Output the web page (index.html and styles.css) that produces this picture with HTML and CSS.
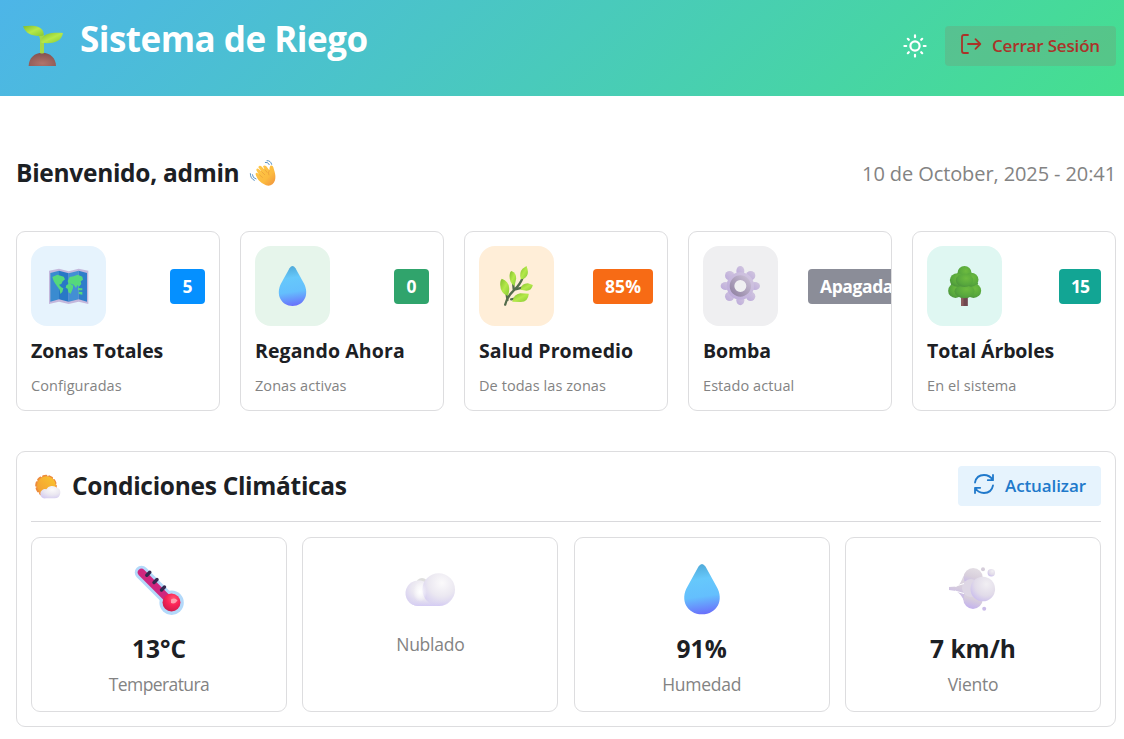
FILE: index.html
```html
<!DOCTYPE html>
<html lang="es">
<head>
<meta charset="utf-8">
<title>Sistema de Riego</title>
<link rel="stylesheet" href="styles.css">
</head>
<body>
<svg class="defs" width="0" height="0" aria-hidden="true">
  <defs>
    <linearGradient id="drop" x1="0.4" y1="0" x2="0.5" y2="1"><stop offset="0" stop-color="#4fa9d8"/><stop offset=".3" stop-color="#66c8fb"/><stop offset=".65" stop-color="#64bffd"/><stop offset="1" stop-color="#6a70fb"/></linearGradient>
    <linearGradient id="leaf" x1="0" y1="0" x2="1" y2="1"><stop offset="0" stop-color="#80bd2c"/><stop offset=".5" stop-color="#b5e94a"/><stop offset="1" stop-color="#86c936"/></linearGradient>
    <radialGradient id="soil" cx=".5" cy=".8" r=".8"><stop offset="0" stop-color="#b0746a"/><stop offset="1" stop-color="#83504f"/></radialGradient>
    <linearGradient id="gear" x1="1" y1="0" x2="0" y2="1"><stop offset="0" stop-color="#d3c8e0"/><stop offset="1" stop-color="#bba9da"/></linearGradient>
    <linearGradient id="ring" x1="1" y1="0" x2="0" y2="1"><stop offset="0" stop-color="#c8bdd4"/><stop offset="1" stop-color="#9385a4"/></linearGradient>
    <radialGradient id="lobe" cx=".6" cy=".35" r=".8"><stop offset="0" stop-color="#6dbb3f"/><stop offset=".6" stop-color="#57a73d"/><stop offset="1" stop-color="#47893b"/></radialGradient>
    <radialGradient id="puff" cx=".6" cy=".3" r=".75"><stop offset="0" stop-color="#fbfafb"/><stop offset=".55" stop-color="#ebe8f1"/><stop offset="1" stop-color="#d5cdf1"/></radialGradient>
    <linearGradient id="base" x1="0" y1="0" x2="0" y2="1"><stop offset="0" stop-color="#e4e1ee" stop-opacity="0"/><stop offset="1" stop-color="#d4cbf4"/></linearGradient>
    <radialGradient id="glow"><stop offset="0" stop-color="#fff"/><stop offset="1" stop-color="#fff" stop-opacity="0"/></radialGradient>
    <linearGradient id="wind" x1="0.7" y1="0" x2="0.4" y2="1"><stop offset="0" stop-color="#e4dfe5"/><stop offset=".5" stop-color="#d8cfdc"/><stop offset="1" stop-color="#c3b1ee"/></linearGradient>
    <radialGradient id="gust" cx=".65" cy=".3" r=".8"><stop offset="0" stop-color="#f1eff3"/><stop offset=".6" stop-color="#e1dbe9"/><stop offset="1" stop-color="#c8baee"/></radialGradient>
    <linearGradient id="sun" x1="1" y1="0" x2="0" y2="1"><stop offset="0" stop-color="#f9c62e"/><stop offset="1" stop-color="#f39a35"/></linearGradient>
    <linearGradient id="hand" x1="0" y1="0" x2="1" y2="1"><stop offset="0" stop-color="#ffc94a"/><stop offset=".6" stop-color="#fcbb3f"/><stop offset="1" stop-color="#ef8f3c"/></linearGradient>
    <radialGradient id="bulb" cx=".6" cy=".3" r=".7"><stop offset="0" stop-color="#ff5a78"/><stop offset=".5" stop-color="#fb2457"/><stop offset="1" stop-color="#cf1c4c"/></radialGradient>
  </defs>
</svg>

<header class="topbar">
  <div class="brand">
    <svg class="brand-icon" viewBox="66 75 126 126">
      <path d="M86 198C86 174 104 158 127 158S168 174 168 198Z" fill="url(#soil)"/>
      <path d="M120 159V118Q118 103 106 99L130 102Q134 108 132 120V159Q126 162 120 159Z" fill="#a4d84a"/>
      <path d="M69 79C96 76 126 76 131 99Q132 106 128 107C101 110 79 105 69 79Z" fill="url(#leaf)"/>
      <path d="M189 99C162 97 128 98 123 122Q122 130 130 129C158 131 184 127 189 99Z" fill="url(#leaf)"/>
    </svg>
    <h1 class="brand-title">Sistema de Riego</h1>
  </div>
  <div class="top-actions">
    <svg class="theme-icon" viewBox="0 0 24 24" fill="none" stroke="#fff" stroke-width="2.2" stroke-linecap="round"><circle cx="12" cy="12" r="4.6"/><path d="M12 1.4V3.2M12 20.8V22.6M1.4 12H3.2M20.8 12H22.6M5.8 5.8L4.8 4.8M18.2 5.8L19.2 4.8M5.8 18.2L4.8 19.2M18.2 18.2L19.2 19.2"/></svg>
    <button class="btn btn-logout">
      <svg class="btn-icon" viewBox="0 0 22 22" fill="none" stroke="currentColor" stroke-width="1.8" stroke-linecap="round" stroke-linejoin="round"><path d="M8 2H4Q2 2 2 4V18Q2 20 4 20H8M8 11H20M15.5 6.2L20.3 11L15.5 15.8"/></svg>
      <span class="btn-text">Cerrar Sesión</span>
    </button>
  </div>
</header>

<main class="content">
  <section class="welcome">
    <h2 class="welcome-title"><span>Bienvenido, admin</span>
      <svg class="wave" viewBox="747 57 84 84">
        <path d="M776 121C771 113 764 102 768 99Q772 97 777 104L769 91Q768 84 775 86L784 94L775 82Q776 75 783 78L794 89L789 79Q793 74 799 79L808 91Q808 80 811 77Q818 74 820 82C823 94 829 106 825 121C821 134 810 140 798 136Q786 132 776 121Z" fill="url(#hand)"/>
        <path d="M778 104L788 113M784 94L795 105M794 88L802 98M808 91Q803 99 807 106" fill="none" stroke="#e99a38" stroke-width="2"/>
        <path d="M796 67Q804 65 808 74M801 62Q812 61 815 73M757 104Q758 115 768 117M751 101Q751 116 763 121" fill="none" stroke="#3f82bd" stroke-width="2.6" stroke-linecap="round"/>
      </svg>
    </h2>
    <time class="date">10 de October, 2025 - 20:41</time>
  </section>

  <section class="stats">
    <article class="card">
      <div class="card-top">
        <div class="tile tile-blue"><svg class="emoji" viewBox="117 123 120 120">
          <path d="M117 137L147 131L176 139L206 131L235 137V237L206 230L176 237L147 230L117 237Z" fill="#c4b7dc"/>
          <path d="M121 144L147 137V223L121 230Z" fill="#3a8bd0"/><path d="M147 137L176 145V230L147 223Z" fill="#2878c6"/><path d="M176 145L206 137V223L176 230Z" fill="#438fd4"/><path d="M206 137L231 144V230L206 223Z" fill="#2f7dca"/>
          <path d="M127 156L142 149L161 155L165 163L158 169L154 177L147 179L154 187L160 190L157 201L151 207L149 194L143 186L136 176L131 168ZM169 181L179 175L190 182L188 192L182 206L175 202L173 191L167 188ZM173 168L179 156L191 154L203 149L217 155L219 164L212 169L214 177L207 185L202 180L198 189L191 179L183 176L176 177ZM204 189L217 190V196H204ZM206 200L217 201V209L206 207Z" fill="#55d87c"/>
        </svg></div>
        <span class="badge badge-blue">5</span>
      </div>
      <h3 class="card-title">Zonas Totales</h3><p class="card-sub">Configuradas</p>
    </article>
    <article class="card">
      <div class="card-top">
        <div class="tile tile-green"><svg class="emoji" viewBox="113.5 123 120 120"><path d="M163 130Q172 116 181 130L206 175C224 209 206 243 172 243S120 209 138 175Z" fill="url(#drop)"/></svg></div>
        <span class="badge badge-green">0</span>
      </div>
      <h3 class="card-title wide">Regando Ahora</h3><p class="card-sub">Zonas activas</p>
    </article>
    <article class="card">
      <div class="card-top">
        <div class="tile tile-orange"><svg class="emoji" viewBox="109.5 123 120 120">
          <path d="M134 239Q140 214 160 196T188 154M141 225L138 206M152 223L174 219M160 196L158 177M165 193L188 187" fill="none" stroke="#536c4b" stroke-width="7" stroke-linecap="round"/>
          <g fill="url(#leaf)"><path d="M142 213Q120 205 119 179Q119 165 124 161Q144 168 146 188Q147 202 142 213Z"/><path d="M162 184Q147 174 147 153Q148 140 153 138Q168 145 167 161Z"/><path d="M181 163Q175 143 186 131L198 123Q206 143 199 153Q192 163 181 163Z"/><path d="M180 194Q183 175 202 175L217 180Q214 197 198 197Z"/><path d="M155 230Q160 208 179 205L205 206Q203 230 181 231Z"/></g>
        </svg></div>
        <span class="badge badge-orange">85%</span>
      </div>
      <h3 class="card-title wide">Salud Promedio</h3><p class="card-sub">De todas las zonas</p>
    </article>
    <article class="card">
      <div class="card-top">
        <div class="tile tile-gray"><svg class="emoji" viewBox="123 123 120 120">
          <g fill="url(#gear)"><ellipse cx="181" cy="138" rx="12" ry="15"/><ellipse cx="181" cy="226" rx="12" ry="15"/><ellipse cx="137" cy="183" rx="15" ry="12"/><ellipse cx="225" cy="183" rx="15" ry="12"/><circle cx="149" cy="152" r="14"/><circle cx="212" cy="152" r="14"/><circle cx="149" cy="214" r="14"/><circle cx="212" cy="214" r="14"/><circle cx="181" cy="183" r="41"/></g>
          <circle cx="181" cy="183" r="25" fill="#efeff1" stroke="url(#ring)" stroke-width="14"/>
        </svg></div>
        <span class="badge badge-gray">Apagada</span>
      </div>
      <h3 class="card-title">Bomba</h3><p class="card-sub">Estado actual</p>
    </article>
    <article class="card">
      <div class="card-top">
        <div class="tile tile-teal"><svg class="emoji" viewBox="794.5 123 120 120">
          <path d="M843 208H863V243H843Z" fill="#704850"/><path d="M843 208H850V243H843Z" fill="#8b5b5d"/>
          <path d="M832 145L874 145L893 175L885 215H822L812 176Z" fill="#4f9a3c"/>
          <g fill="url(#lobe)"><ellipse cx="826" cy="197" rx="22" ry="22"/><ellipse cx="880" cy="197" rx="23" ry="22"/><ellipse cx="853" cy="199" rx="30" ry="21"/><circle cx="853" cy="144" r="21"/><ellipse cx="832" cy="165" rx="23" ry="20"/><ellipse cx="873" cy="164" rx="22" ry="21"/><ellipse cx="853" cy="166" rx="26" ry="20"/></g>
        </svg></div>
        <span class="badge badge-teal">15</span>
      </div>
      <h3 class="card-title">Total Árboles</h3><p class="card-sub">En el sistema</p>
    </article>
  </section>

  <section class="climate">
    <div class="climate-head">
      <h2 class="climate-title">
        <svg class="sun-icon" viewBox="74 86 84 84">
          <circle cx="110" cy="124" r="29" fill="#ed8b3b" stroke="#ed8b3b" stroke-width="7" stroke-dasharray="9 9.22" stroke-linecap="round"/><circle cx="111" cy="124" r="28" fill="url(#sun)"/>
          <path d="M110 162A14 14 0 1 1 111 135A20 18 0 0 1 143 130Q154 133 153 146Q151 162 136 162Z" fill="url(#puff)"/>
        </svg>
        <span class="climate-text">Condiciones Climáticas</span>
      </h2>
      <button class="btn btn-refresh">
        <svg class="btn-icon" viewBox="0 0 22 22" fill="none" stroke="currentColor" stroke-width="1.8" stroke-linecap="round" stroke-linejoin="round"><path d="M2 9.5C3 4.500 6.500 2 11 2C15 2 17.800 3.800 19.800 7M20 2V7.200H14.800M20 12.500C19 17.500 15.500 20 11 20C7 20 4.200 18.200 2.200 15M2 20V14.800H7.200"/></svg>
        <span class="btn-text">Actualizar</span>
      </button>
    </div>
    <div class="metrics">
      <article class="metric">
        <svg class="metric-icon" viewBox="134 565 50 50">
          <path d="M141.500 572.500L169 600" stroke="#b3d9fa" stroke-width="13.500" stroke-linecap="round"/><circle cx="171.600" cy="602.700" r="12.200" fill="#b3d9fa"/>
          <path d="M141.500 572.500L169 600" stroke="#cf277f" stroke-width="7.500" stroke-linecap="round"/><circle cx="171.500" cy="602.500" r="9" fill="url(#bulb)"/>
          <path d="M146.800 575.300L149.800 572.300M154 582.500L157 579.500M161.500 590L164.500 587" stroke="#322950" stroke-width="3.400" stroke-linecap="round"/><path d="M171 599.500Q175 597 177.500 600.500Q175 604.500 171 603Z" fill="#ff9eae"/>
        </svg>
        <strong class="value">13°C</strong><span class="label tight">Temperatura</span>
      </article>
      <article class="metric">
        <svg class="metric-icon" viewBox="405 565 50 50">
          <circle cx="422" cy="584" r="6" fill="#dededd"/><path d="M418 606A12.800 12.800 0 1 1 426 583L440 606Z" fill="url(#puff)"/><circle cx="438.700" cy="589.500" r="16.300" fill="url(#puff)"/><path d="M407 599H452Q448 606 439 606H418Q411 606 407 599Z" fill="url(#base)"/><ellipse cx="420" cy="592" rx="7" ry="10" fill="url(#glow)"/>
        </svg>
        <span class="label label-solo">Nublado</span>
      </article>
      <article class="metric">
        <svg class="metric-icon" viewBox="677 565 50 50"><path d="M698.500 566.500Q702 561.500 705.500 566.500L716.500 586.500C724.500 600 717 614.300 702 614.300S679.500 600 687.500 586.500Z" fill="url(#drop)"/></svg>
        <strong class="value">91%</strong><span class="label">Humedad</span>
      </article>
      <article class="metric">
        <svg class="metric-icon" viewBox="948 565 50 50">
          <path d="M949 587L957 586.500C962 583 962 577 966 572L980 580V600L966 604C963 599 962 595 956 591L949 590Z" fill="url(#wind)"/>
          <circle cx="973.200" cy="577.500" r="9.500" fill="url(#wind)"/><circle cx="973" cy="599.200" r="9.700" fill="url(#wind)"/><circle cx="971" cy="588" r="9" fill="#ded7e5"/><circle cx="982.800" cy="589" r="12.300" fill="url(#gust)"/>
          <path d="M955 586.300L964 583.500M955 591L964 593.500" stroke="#fff" stroke-width="1"/><circle cx="983" cy="569.200" r="2" fill="#d5cdda"/><circle cx="991.300" cy="572.700" r="3.700" fill="url(#gust)"/><circle cx="984.200" cy="608.800" r="2" fill="#cbbde9"/>
        </svg>
        <strong class="value">7 km/h</strong><span class="label">Viento</span>
      </article>
    </div>
  </section>
</main>
</body>
</html>
```

FILE: styles.css
```css
* { box-sizing: border-box; }
body { margin: 0; background: #fff; color: #1c2024; font-family: "Open Sans", "Noto Sans", sans-serif; }
h1, h2, h3, p { margin: 0; }
svg { display: block; flex: none; overflow: visible; }
.defs { height: 0; }

.topbar { height: 96px; display: flex; justify-content: space-between; align-items: center; padding: 0 8px 4px 22px; background: linear-gradient(135deg, #4db5e8, #45df8f); }
.brand { display: flex; align-items: center; gap: 16px; }
.brand-icon { width: 42px; height: 42px; }
.brand-title { color: #fff; font-size: 35px; line-height: 48px; font-weight: 700; letter-spacing: -0.5px; padding-bottom: 14px; }
.top-actions { display: flex; align-items: center; gap: 18px; }
.theme-icon { width: 24px; height: 24px; }

.btn { display: flex; align-items: center; height: 40px; border: 0; border-radius: 4px; font-family: inherit; font-size: 17px; font-weight: 600; white-space: nowrap; }
.btn-icon { width: 22px; height: 22px; margin-top: -4px; }
.btn-text { padding-bottom: 2px; }
.btn-logout { width: 171px; gap: 10px; padding: 0 0 0 15px; background: rgba(113, 160, 120, .38); color: #aa3329; letter-spacing: -0.17px; }
.btn-refresh { width: 143px; gap: 10px; padding: 0 0 0 15px; background: #e6f3fd; color: #2079cb; letter-spacing: -0.1px; }

.content { padding: 55px 8px 0 16px; }
.welcome { display: flex; align-items: center; justify-content: space-between; height: 44px; }
.welcome-title { display: flex; align-items: center; gap: 10px; font-size: 24.500px; line-height: 36px; font-weight: 700; letter-spacing: -0.3px; }
.wave { width: 28px; height: 28px; }
.date { color: #838383; font-size: 20px; letter-spacing: -0.1px; }

.stats { display: grid; grid-template-columns: repeat(5, 204px); gap: 20px; margin-top: 36px; }
.card { height: 180px; padding: 14px; border: 1px solid #dddddf; border-radius: 9px; overflow: hidden; }
.card-top { display: flex; align-items: center; justify-content: space-between; gap: 30px; height: 80px; }
.tile { width: 75px; height: 80px; border-radius: 16px; flex: none; display: grid; place-items: center; }
.tile-blue { background: #e6f3fd; }
.tile-green { background: #e6f5eb; }
.tile-orange { background: #ffeed8; }
.tile-gray { background: #efeff1; }
.tile-teal { background: #dff7f2; }
.emoji { width: 40px; height: 40px; }
.badge { height: 35px; min-width: 35px; padding: 0 12px; border-radius: 4px; color: #fff; font-size: 17.500px; line-height: 35px; font-weight: 700; flex: none; letter-spacing: -0.1px; text-align: center; }
.badge-blue { background: #0590ff; }
.badge-green { background: #30a46c; }
.badge-orange { background: #f76b15; letter-spacing: 0.1px; }
.badge-gray { background: #8b8d98; letter-spacing: -0.4px; }
.badge-teal { background: #12a594; letter-spacing: -1px; }
.card-title { margin-top: 10px; font-size: 19.500px; line-height: 30px; font-weight: 700; letter-spacing: -0.1px; white-space: nowrap; }
.card-title.wide { letter-spacing: 0.1px; }
.card-sub { margin-top: 9px; font-size: 14.500px; line-height: 22px; letter-spacing: 0.07px; color: #838383; }

.climate { margin-top: 40px; height: 276px; padding: 14px; border: 1px solid #dddddf; border-radius: 9px; }
.climate-head { display: flex; align-items: flex-start; justify-content: space-between; height: 56px; border-bottom: 1px solid #d9d9dc; }
.climate-title { display: flex; align-items: center; gap: 10px; padding-left: 3px; height: 40px; font-size: 24.500px; font-weight: 700; letter-spacing: -0.3px; }
.climate-text { padding-bottom: 2px; }
.sun-icon { width: 28px; height: 28px; margin-top: 2px; }
.metrics { display: grid; grid-template-columns: repeat(4, 256px); justify-content: space-between; margin-top: 15px; }
.metric { display: flex; flex-direction: column; align-items: center; height: 175px; padding-top: 27px; border: 1px solid #dddddf; border-radius: 9px; }
.metric-icon { width: 50px; height: 50px; }
.value { margin-top: 16px; font-size: 24.500px; line-height: 36px; letter-spacing: 0; }
.label { margin-top: 4px; font-size: 17.500px; line-height: 26px; letter-spacing: -0.25px; color: #838383; }
.label.tight { letter-spacing: -0.6px; }
.label-solo { margin-top: 16px; }
```
